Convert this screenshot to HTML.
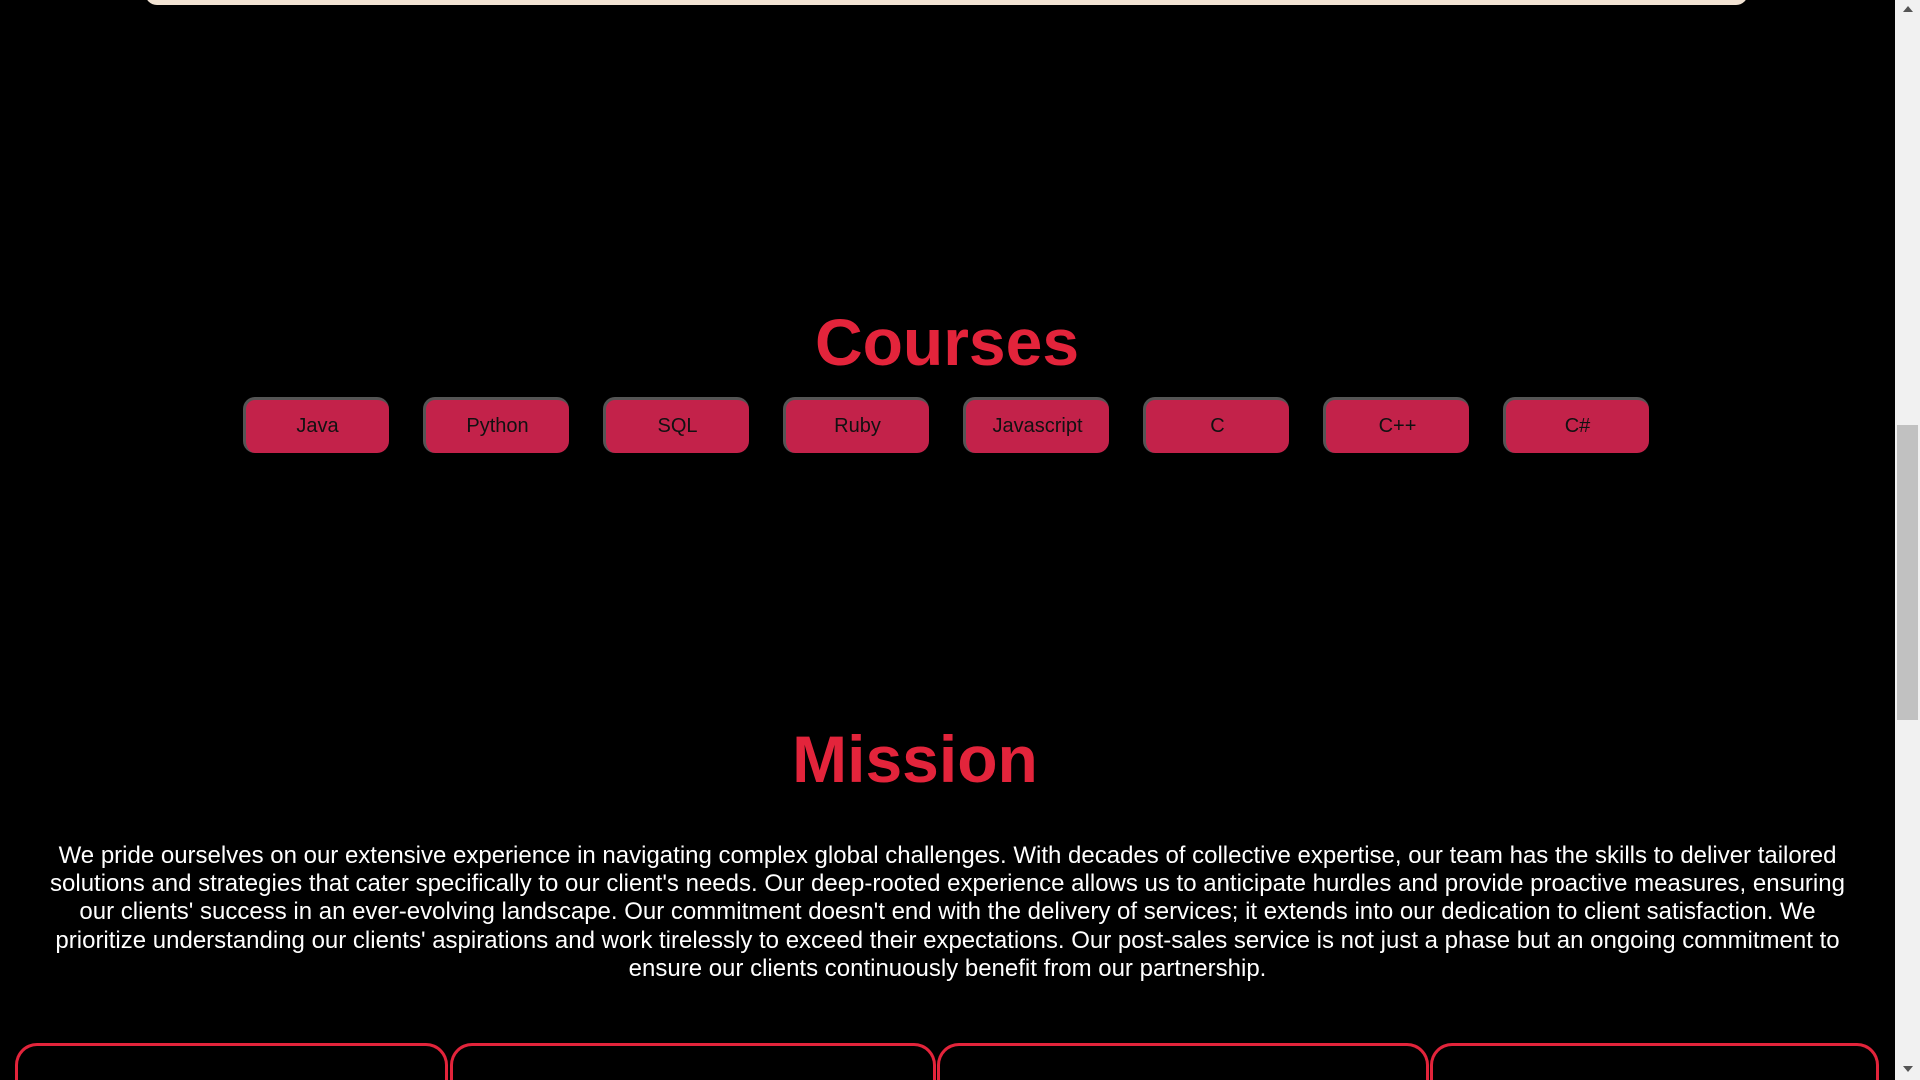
<!DOCTYPE html>
<html><head><meta charset="utf-8"><style>
html,body{margin:0;padding:0;background:#000;width:1920px;height:1080px;overflow:hidden;font-family:"Liberation Sans",Arial,sans-serif}
body{position:relative}
.topbar{position:absolute;left:145px;top:-20px;width:1603px;height:25px;background:#f2e3d3;border-radius:0 0 12px 12px}
h2{position:absolute;margin:0;font-size:66px;font-weight:bold;color:#e3243b;line-height:1;transform:translateX(-50%);white-space:nowrap}
.btn{position:absolute;top:397px;width:143px;height:53px;background:#c3224a;border-top:3px solid #555;border-left:3px solid #555;border-radius:12px;font-size:20px;color:#111;display:flex;align-items:center;justify-content:center;box-sizing:content-box}
p{position:absolute;left:40px;top:842px;width:1815px;margin:0;text-align:center;color:#fff;font-size:24px;line-height:28.2px}
.card{position:absolute;top:1043px;height:37px;border:3px solid #e3243b;border-bottom:none;border-radius:22px 22px 0 0;box-sizing:border-box}
.sb{position:absolute;right:0;top:0;width:25px;height:1080px;background:#f1f1f1}
.thumb{position:absolute;right:2px;top:425px;width:21px;height:295px;background:#c1c1c1}
</style></head><body>
<div class="topbar"></div>
<h2 style="left:947px;top:309px">Courses</h2>
<div class="btn" style="left:243px">Java</div>
<div class="btn" style="left:423px">Python</div>
<div class="btn" style="left:603px">SQL</div>
<div class="btn" style="left:783px">Ruby</div>
<div class="btn" style="left:963px">Javascript</div>
<div class="btn" style="left:1143px">C</div>
<div class="btn" style="left:1323px">C++</div>
<div class="btn" style="left:1503px">C#</div>
<h2 style="left:915px;top:726px">Mission</h2>
<p>We pride ourselves on our extensive experience in navigating complex global challenges. With decades of collective expertise, our team has the skills to deliver tailored solutions and strategies that cater specifically to our client's needs. Our deep-rooted experience allows us to anticipate hurdles and provide proactive measures, ensuring our clients' success in an ever-evolving landscape. Our commitment doesn't end with the delivery of services; it extends into our dedication to client satisfaction. We prioritize understanding our clients' aspirations and work tirelessly to exceed their expectations. Our post-sales service is not just a phase but an ongoing commitment to ensure our clients continuously benefit from our partnership.</p>
<div class="card" style="left:15px;width:433px"></div>
<div class="card" style="left:450px;width:486px"></div>
<div class="card" style="left:937px;width:492px"></div>
<div class="card" style="left:1430px;width:449px"></div>
<div class="sb"><div class="thumb"></div>
<div style="position:absolute;left:8px;top:6px;width:0;height:0;border-left:5px solid transparent;border-right:5px solid transparent;border-bottom:6px solid #555"></div>
<div style="position:absolute;left:8px;top:1066px;width:0;height:0;border-left:5px solid transparent;border-right:5px solid transparent;border-top:6px solid #555"></div>
</div>
</body></html>
